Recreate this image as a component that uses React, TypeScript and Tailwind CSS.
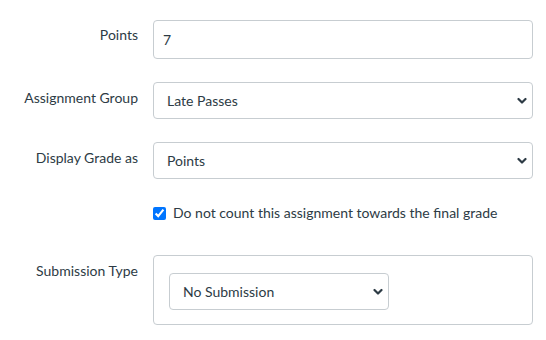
import React from "react";

function Chevron() {
  return (
    <svg
      width="10"
      height="7"
      viewBox="0 0 10 7"
      className="pointer-events-none absolute right-[6px] top-1/2 -translate-y-1/2"
    >
      <path d="M1.5 1.5 L5 5 L8.5 1.5" fill="none" stroke="#2d3b45" strokeWidth="2.2" strokeLinecap="round" strokeLinejoin="round" />
    </svg>
  );
}

function SelectBox({ value, width }: { value: string; width: string }) {
  return (
    <div className={`relative ${width}`}>
      <div className="flex h-[37px] items-center rounded-[4px] border border-[#c7cdd1] bg-white pl-[13px] text-[14px] text-[#2d3b45]">
        {value}
      </div>
      <Chevron />
    </div>
  );
}

function Row({ label, children, labelPt = "pt-[5px]" }: { label: string; children: React.ReactNode; labelPt?: string }) {
  return (
    <div className="flex">
      <div className={`w-[138px] shrink-0 text-right text-[14px] leading-[20px] text-[#2d3b45] ${labelPt}`}>{label}</div>
      <div className="ml-[15px] w-[380px]">{children}</div>
    </div>
  );
}

export default function App() {
  return (
    <div
      className="h-[340px] w-[546px] overflow-hidden bg-white pt-[20px]"
      style={{ fontFamily: "Lato, 'Liberation Sans', sans-serif" }}
    >
      <div className="flex flex-col gap-[23px]">
        <Row label="Points" labelPt="pt-[5px]">
          <div className="flex h-[39px] items-center rounded-[4px] border border-[#c7cdd1] bg-white pl-[9px] text-[14px] text-[#2d3b45]">
            7
          </div>
        </Row>
        <Row label="Assignment Group" labelPt="pt-[6px]">
          <SelectBox value="Late Passes" width="w-[380px]" />
        </Row>
        <Row label="Display Grade as" labelPt="pt-[6px]">
          <SelectBox value="Points" width="w-[380px]" />
        </Row>
      </div>
      <div className="mt-[24px] flex">
        <div className="w-[138px] shrink-0" />
        <label className="ml-[15px] flex items-center gap-[7px] text-[14px] leading-[20px] text-[#2d3b45]">
          <input type="checkbox" checked readOnly className="m-0 h-[13px] w-[13px] accent-[#0075ff]" />
          <span>Do not count this assignment towards the final grade</span>
        </label>
      </div>
      <div className="mt-[32px]">
        <Row label="Submission Type" labelPt="pt-[6px]">
          <div className="h-[70px] rounded-[4px] border border-[#c7cdd1] bg-white pl-[15px] pt-[17px]">
            <SelectBox value="No Submission" width="w-[220px]" />
          </div>
        </Row>
      </div>
    </div>
  );
}
